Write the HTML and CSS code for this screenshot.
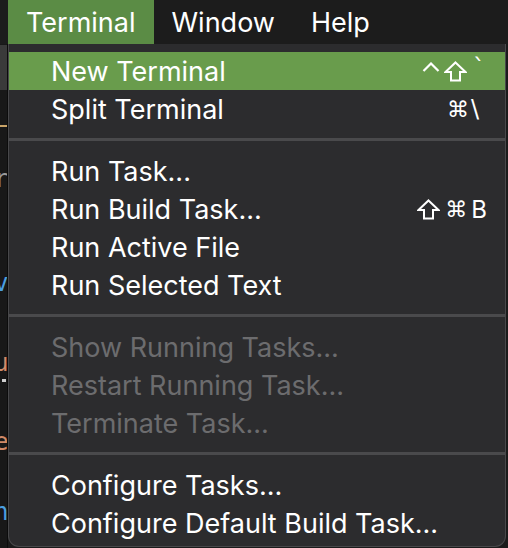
FILE: index.html
```html
<!DOCTYPE html>
<html>
<head>
<meta charset="utf-8">
<link rel="stylesheet" href="styles.css">
</head>
<body>
<div class="screen">
  <div class="menubar">
    <span class="mb-item active">Terminal</span>
    <span class="mb-item">Window</span>
    <span class="mb-item">Help</span>
  </div>
  <div class="main">
    <div class="strip">
      <div class="frag-block"></div>
      <div class="frag-line"></div>
      <div class="frag-text frag-r">r</div>
      <div class="frag-text frag-v">v</div>
      <div class="frag-text frag-u">u</div>
      <div class="frag-dot"></div>
      <div class="frag-text frag-e">e</div>
      <div class="frag-text frag-n">n</div>
    </div>
    <div class="menu">
      <div class="item selected">
        <span class="label">New Terminal</span>
        <span class="keys">
          <svg class="ctrl" width="18" height="10" viewBox="0 0 18 10"><polyline points="1.5,9 9,1.5 16.5,9" fill="none" stroke="#fff" stroke-width="2.2"/></svg>
          <svg class="shift" width="23" height="21" viewBox="0 0 23 21"><path d="M11.5 1.5 L21.5 11 H16 V19.5 H7 V11 H1.5 Z" fill="none" stroke="#fff" stroke-width="2" stroke-linejoin="miter"/></svg>
          <span class="tick">`</span>
        </span>
      </div>
      <div class="item">
        <span class="label">Split Terminal</span>
        <span class="keys"><span class="cmd">⌘</span><span class="bs">\</span></span>
      </div>
      <div class="sep"></div>
      <div class="item"><span class="label">Run Task...</span></div>
      <div class="item">
        <span class="label">Run Build Task...</span>
        <span class="keys">
          <svg class="shift" width="23" height="21" viewBox="0 0 23 21"><path d="M11.5 1.5 L21.5 11 H16 V19.5 H7 V11 H1.5 Z" fill="none" stroke="#fff" stroke-width="2" stroke-linejoin="miter"/></svg>
          <span class="cmd">⌘</span><span class="b">B</span>
        </span>
      </div>
      <div class="item"><span class="label">Run Active File</span></div>
      <div class="item"><span class="label">Run Selected Text</span></div>
      <div class="sep"></div>
      <div class="item disabled"><span class="label">Show Running Tasks...</span></div>
      <div class="item disabled"><span class="label">Restart Running Task...</span></div>
      <div class="item disabled"><span class="label">Terminate Task...</span></div>
      <div class="sep"></div>
      <div class="item"><span class="label">Configure Tasks...</span></div>
      <div class="item"><span class="label">Configure Default Build Task...</span></div>
    </div>
  </div>
</div>
</body>
</html>
```
FILE: styles.css
```css
* { box-sizing: border-box; }
html, body {
  margin: 0;
  padding: 0;
  background: #1b1b1b;
}
.screen {
  width: 508px;
  height: 548px;
  overflow: hidden;
  font-family: Inter, "Noto Sans", sans-serif;
  color: #fff;
  display: flex;
  flex-direction: column;
}
.menubar {
  height: 44px;
  flex: none;
  display: flex;
  padding-left: 8px;
  background: #1c1c1c;
}
.mb-item {
  padding: 0 18px;
  font-size: 27px;
  line-height: 45px;
  color: #fff;
}
.mb-item.active {
  background: #5b8c45;
}
.main {
  flex: 1;
  display: flex;
  min-height: 0;
}
.strip {
  flex: none;
  width: 8px;
  background: #181818;
  border-right: 1px solid #0c0c0c;
  display: flex;
  flex-direction: column;
  overflow: hidden;
}
.frag-block {
  height: 45px;
  margin-top: 1px;
  width: 7px;
  background: #3a3a3a;
}
.frag-line {
  margin-top: 35px;
  height: 2px;
  width: 7px;
  background: #c9a468;
}
.frag-text {
  font-family: "DejaVu Sans Mono", monospace;
  font-size: 24px;
  line-height: 24px;
  height: 24px;
  margin-left: -6px;
}
.frag-r { margin-top: 40px; color: #9a9a9a; }
.frag-v { margin-top: 80px; color: #4a9fe0; }
.frag-u { margin-top: 56px; color: #d08a68; }
.frag-dot {
  margin-top: 4px;
  width: 4px;
  height: 3px;
  background: #d0d0d0;
  align-self: flex-end;
  margin-right: 1px;
}
.frag-e { margin-top: 48px; color: #d08a68; }
.frag-n { margin-top: 46px; color: #4a9fe0; }
.menu {
  width: 498px;
  flex: none;
  height: 503px;
  background: #2c2c2e;
  border: 1px solid #48484a;
  border-top: none;
  border-radius: 0 0 11px 11px;
  padding-top: 8px;
  display: flex;
  flex-direction: column;
}
.item {
  height: 38px;
  display: flex;
  align-items: center;
  justify-content: space-between;
  padding: 0 18px 0 42px;
  font-size: 27px;
  color: #fff;
}
.item.selected {
  background: #699c4c;
}
.item.disabled {
  color: #6c6c6e;
}
.keys {
  display: flex;
  align-items: center;
  font-size: 24px;
}
.ctrl { margin-top: -8px; margin-right: 4px; }
.tick {
  font-family: "DejaVu Sans", sans-serif;
  margin-left: 6px;
  margin-top: -6px;
  margin-right: 2px;
}
.cmd {
  font-family: "DejaVu Sans", sans-serif;
  font-size: 22px;
  margin-left: 5px;
}
.bs {
  font-family: "DejaVu Sans", sans-serif;
  margin-left: 2px;
  margin-right: 8px;
}
.b { margin-left: 4px; }
.sep {
  height: 3px;
  margin: 10px 0 11px;
  background: #4a4a4c;
}
```
